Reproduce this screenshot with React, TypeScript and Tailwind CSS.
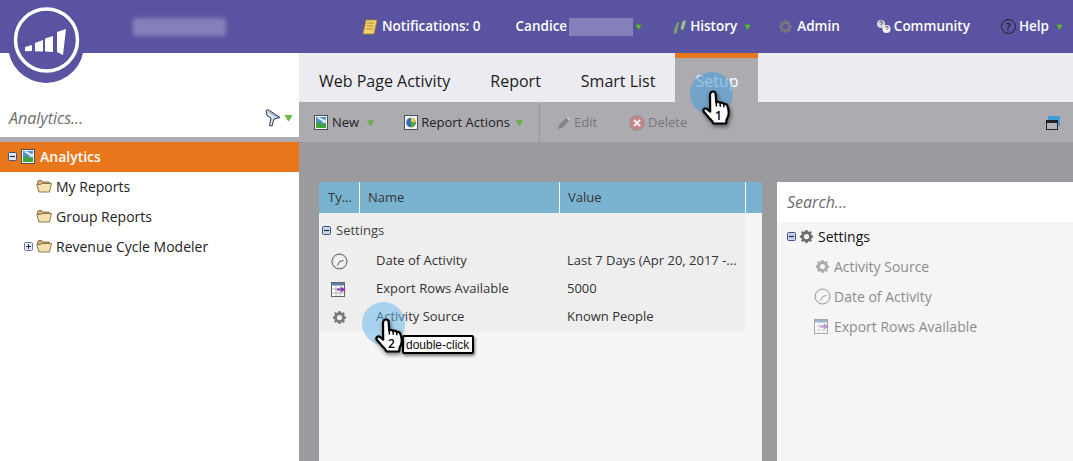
import { ReactNode } from "react";

const font = { fontFamily: '"Open Sans", sans-serif' };

const Caret = ({ className = "" }: { className?: string }) => (
  <svg width="9" height="8" viewBox="0 0 9 8" className={className}>
    <path d="M0.5 1h8L4.5 7.5z" fill="#62c22f" stroke="#3f8a22" strokeWidth="0.5" />
  </svg>
);

const Minus = ({ fill = "#dfe4ee" }: { fill?: string }) => (
  <svg width="9" height="9" viewBox="0 0 9 9" className="shrink-0">
    <rect x="0.5" y="0.5" width="8" height="8" rx="1" fill={fill} stroke="#3d5680" />
    <path d="M2 4.5h5" stroke="#1d2f55" strokeWidth="1.2" />
  </svg>
);

const Plus = () => (
  <svg width="9" height="9" viewBox="0 0 9 9" className="shrink-0">
    <rect x="0.5" y="0.5" width="8" height="8" rx="1" fill="#e8ebf2" stroke="#6a7a96" />
    <path d="M2 4.5h5M4.5 2v5" stroke="#1d2f55" />
  </svg>
);

const Folder = () => (
  <svg width="16" height="14" viewBox="0 0 16 14" className="shrink-0">
    <path d="M1.500 4.500V2.500l1-1h3l1.500 1.500h6l.5 1v8.500H3z" fill="#cfae6c" stroke="#6f6038" strokeWidth="0.8" />
    <path d="M.7 5.500h4l1-1h9.800l-2 8.500H3z" fill="#f4e2ae" stroke="#6f6038" strokeWidth="0.8" />
  </svg>
);

const ReportIcon = () => (
  <svg width="14" height="15" viewBox="0 0 14 15" className="shrink-0">
    <rect x="0.5" y="0.5" width="13" height="14" fill="#f3f5f8" stroke="#4a4f57" />
    <rect x="2" y="2" width="10" height="11" fill="#4f93cf" />
    <path d="M2 8l3-1 3 2 4-1v5H2z" fill="#3fa53a" />
    <path d="M3 3l6 3.500-1 1L12 8l-.5-4-1 1L5 2z" fill="#e9f2fa" />
  </svg>
);

const ActionsIcon = () => (
  <svg width="14" height="15" viewBox="0 0 14 15" className="shrink-0">
    <rect x="0.5" y="0.5" width="13" height="14" fill="#f3f5f8" stroke="#4a4f57" />
    <circle cx="7" cy="7.500" r="4.800" fill="#2f6fb5" />
    <path d="M7 7.500V2.700a4.800 4.800 0 014.800 4.800z" fill="#e9c93f" />
    <path d="M7 7.500h4.800A4.800 4.800 0 017 12.300z" fill="#56a83d" />
  </svg>
);

const Gear = ({ size = 16, color = "#7a7a7a" }: { size?: number; color?: string }) => (
  <svg width={size} height={size} viewBox="0 0 16 16" className="shrink-0">
    <circle cx="8" cy="8" r="4.300" fill="none" stroke={color} strokeWidth="3" />
    <path
      d="M8 1v2.500M8 12.500V15M1 8h2.500M12.500 8H15M3 3l1.800 1.800M11.200 11.200L13 13M13 3l-1.800 1.800M4.800 11.200L3 13"
      stroke={color}
      strokeWidth="2.400"
    />
  </svg>
);

const Clock = ({ faded = false }: { faded?: boolean }) => (
  <svg width="17" height="17" viewBox="0 0 17 17" className="shrink-0">
    <circle cx="8.500" cy="8.500" r="7.500" fill={faded ? "#eceef0" : "#dfe2e7"} stroke={faded ? "#9a9a9a" : "#5c5c5c"} />
    <circle cx="8.500" cy="8.500" r="5.800" fill={faded ? "#f7f7f7" : "#f1f2f4"} />
    <path d="M8.500 8.500L12.500 7.500M8.500 8.500L6.500 12.500" stroke={faded ? "#999" : "#555"} fill="none" />
  </svg>
);

const ExportIcon = ({ faded = false }: { faded?: boolean }) => (
  <svg width="16" height="15" viewBox="0 0 16 15" className="shrink-0">
    <rect x="0.500" y="0.500" width="13" height="14" fill="#fff" stroke={faded ? "#a5a5a5" : "#666"} />
    <rect x="1" y="1" width="12" height="2.500" fill={faded ? "#9fb4d0" : "#5b7fb5"} />
    <path d="M1 7h12M1 11h12M5 3v11M9 3v11" stroke={faded ? "#c5c5c5" : "#999"} strokeWidth="0.700" />
    <path d="M6 7.500h5" stroke={faded ? "#b99ad0" : "#8a3fb0"} strokeWidth="2" />
    <path d="M10 4.500l5 3-5 3z" fill={faded ? "#b99ad0" : "#8a3fb0"} />
  </svg>
);

// pointing hand cursor used by the numbered callouts
const Hand = ({ step, className }: { step: string; className: string }) => (
  <div className={`absolute h-[36px] w-[30px] ${className}`}>
    <svg width="30" height="36" viewBox="0 0 30 36" className="drop-shadow-[1px_2px_2px_rgba(0,0,0,0.55)]">
      <path
        d="M11 1.500c1.600 0 2.600 1.200 2.700 2.800l.5 8.200c1.400-1 3.300-.8 3.900.7 1.300-.9 3.100-.5 3.600 1 1.300-.6 2.900 0 3.500 1.300 1.300 2.800 1.800 6.400 1.300 9.500-.3 2-1.200 3.500-2 5l-.3 3.500H11.500c-1-2.300-2.600-3.700-4.400-5.600L1.800 21.800c-1.300-1.900.8-4.200 3-3l3.400 2.800-.2-16.800c0-1.700 1.300-3.300 3-3.300z"
        fill="#fff"
        stroke="#000"
        strokeWidth="2.200"
        strokeLinejoin="round"
      />
      <path d="M14.300 12.500l.1 4M18.100 13.200l.2 3.500M21.700 14.200l.1 3" stroke="#000" strokeWidth="1.500" />
    </svg>
    <span className="absolute left-[13px] top-[19px] text-[12px] font-semibold leading-[14px] text-black" style={font}>
      {step}
    </span>
  </div>
);

const NavItem = ({ icon, label, caret, className }: { icon?: ReactNode; label: string; caret?: boolean; className: string }) => (
  <div className={`flex items-center whitespace-nowrap ${className}`}>
    {icon}
    <span className="text-[13.5px] font-semibold text-white">{label}</span>
    {caret && <Caret className="ml-[6px] scale-75" />}
  </div>
);

const TreeRow = ({ children, className = "" }: { children: ReactNode; className?: string }) => (
  <div className={`flex h-[30px] items-center ${className}`}>{children}</div>
);

const PropRow = ({ icon, name, value }: { icon: ReactNode; name: string; value: string }) => (
  <div className="flex h-[28px] items-center text-[13px] text-[#333]">
    <div className="flex w-[40px] justify-center">{icon}</div>
    <div className="ml-[17px] w-[191px]">{name}</div>
    <div className="whitespace-nowrap">{value}</div>
  </div>
);

export default function App() {
  return (
    <div className="relative flex h-[461px] w-[1073px] flex-col overflow-hidden bg-white" style={font}>
      <header className="flex h-[53px] shrink-0 items-center bg-[#5a53a1]">
        <div className="ml-[133px] h-[18px] w-[93px] bg-[#8580bb] blur-[2px]" />
        <NavItem
          className="ml-[136px]"
          label="Notifications: 0"
          icon={
            <svg width="16" height="16" viewBox="0 0 16 16" className="mr-[4px]">
              <path d="M4 1h11l-3 14H1z" fill="#f3d36b" stroke="#a5802a" strokeWidth="0.800" />
              <path d="M5 4h7M4.500 7h7M4 10h7" stroke="#b08a2e" />
            </svg>
          }
        />
        <div className="ml-[35px] flex items-center">
          <span className="text-[13.5px] font-semibold text-white">Candice</span>
          <div className="ml-[2px] h-[18px] w-[64px] bg-[#8580bb]" />
          <Caret className="ml-[1px] scale-75" />
        </div>
        <NavItem
          className="ml-[29px]"
          label="History"
          caret
          icon={
            <svg width="15" height="16" viewBox="0 0 15 16" className="mr-[3px]">
              <path d="M4 5c1-2.500 3-3 3.200-1.500.2 1.800-1 4-1.500 6.500L5 14.500c-.5 1-3.500.8-3.500-.7C1.500 11 2.800 8 4 5z" fill="#7f9c92" stroke="#4a615a" strokeWidth="0.700" />
              <path d="M11 1.500c1.300-1 3-.5 3 1 0 2.500-1.500 5-2 7.500-.5 1.500-3 1.500-3.500 0C8.500 7 9.500 3.500 11 1.500z" fill="#a3b8b0" stroke="#4a615a" strokeWidth="0.700" />
            </svg>
          }
        />
        <NavItem
          className="ml-[26px]"
          label="Admin"
          icon={
            <span className="mr-[4px]">
              <Gear size={15} color="#77757f" />
            </span>
          }
        />
        <NavItem
          className="ml-[36px]"
          label="Community"
          icon={
            <svg width="15" height="16" viewBox="0 0 15 16" className="mr-[3px]">
              <circle cx="5" cy="5" r="4" fill="#d5d5dc" />
              <circle cx="10.500" cy="10" r="4" fill="#f1f1f4" />
              <path d="M3.800 3.500a1.300 1.300 0 112 1.200L5 5.800M9.500 8.500a1.300 1.300 0 112 1.200l-1 1.100" stroke="#333" fill="none" />
            </svg>
          }
        />
        <NavItem
          className="ml-[31px]"
          label="Help"
          caret
          icon={
            <span className="mr-[3px] flex h-[15px] w-[15px] items-center justify-center rounded-full border border-[#222] text-[11px] font-semibold leading-none text-[#222]">
              ?
            </span>
          }
        />
      </header>

      <div className="flex min-h-0 flex-1">
        <aside className="flex w-[299px] shrink-0 flex-col">
          <div className="flex h-[84px] shrink-0 items-end justify-between pb-[8px] pl-[9px] pr-[6px]">
            <span className="text-[16px] italic leading-[22px] text-[#6d6d6d]">Analytics...</span>
            <div className="mb-[2px] flex items-center gap-[3px]">
              <svg width="16" height="18" viewBox="0 0 16 18">
                <path d="M1 1.500c2-1.500 3.500 0 5 1L15 8.500 9 10l-2 7-2.500-.5L6 9 2 6.500z" fill="#dbe3ee" stroke="#2a3a52" />
                <path d="M3.500 2.500L13 8.500" stroke="#7f93ad" />
              </svg>
              <Caret className="scale-90" />
            </div>
          </div>
          <div className="h-[5px] shrink-0 bg-[#acabb0]" />
          <TreeRow className="bg-[#e8761b] pb-px pl-[8px]">
            <Minus />
            <span className="ml-[4px] flex">
              <ReportIcon />
            </span>
            <span className="ml-[5px] text-[14px] font-semibold text-white">Analytics</span>
          </TreeRow>
          {["My Reports", "Group Reports"].map((r) => (
            <TreeRow key={r} className="pb-[2px] pl-[36px] text-[14px] text-[#222]">
              <Folder />
              <span className="ml-[4px]">{r}</span>
            </TreeRow>
          ))}
          <TreeRow className="pb-[2px] pl-[24px] text-[14px] text-[#222]">
            <Plus />
            <span className="ml-[3px]">
              <Folder />
            </span>
            <span className="ml-[4px]">Revenue Cycle Modeler</span>
          </TreeRow>
        </aside>

        <main className="flex min-w-0 flex-1 flex-col">
          <div className="flex h-[49px] shrink-0 bg-[#ecebf1] text-[16px] text-[#1b1b1b]">
            <div className="flex items-center pl-[20px] pt-[7px]">Web Page Activity</div>
            <div className="ml-[40px] flex items-center pt-[7px]">Report</div>
            <div className="ml-[40px] flex items-center pt-[7px]">Smart List</div>
            <div className="ml-[20px] flex w-[83px] items-center justify-center border-t-[5px] border-[#e8761b] bg-[#acabb0] pt-[2px] text-white">
              Setup
            </div>
          </div>

          <div className="flex h-[40px] shrink-0 items-center bg-[#acabb0] pl-[15px] pr-[13px] pt-px text-[13px]">
            <ReportIcon />
            <span className="ml-[4px] text-[#222]">New</span>
            <Caret className="ml-[7px] scale-75" />
            <span className="ml-[29px] flex">
              <ActionsIcon />
            </span>
            <span className="ml-[3px] text-[#222]">Report Actions</span>
            <Caret className="ml-[5px] scale-75" />
            <div className="ml-[15px] h-full w-px bg-[#98979c]" />
            <svg width="14" height="14" viewBox="0 0 14 14" className="ml-[17px]">
              <path d="M1 13l1-4 7-7 3 3-7 7z" fill="#85848a" />
              <path d="M9.500 1.500l3 3 1-1.500-2-2z" fill="#c3ccd6" />
            </svg>
            <span className="ml-[3px] text-[#77767c]">Edit</span>
            <svg width="16" height="16" viewBox="0 0 16 16" className="ml-[32px]">
              <circle cx="8" cy="8" r="7.300" fill="#c98585" stroke="#8f8f8f" />
              <path d="M5 5l6 6M11 5l-6 6" stroke="#f4eaea" strokeWidth="2.200" />
            </svg>
            <span className="ml-[3px] text-[#77767c]">Delete</span>
            <div className="relative ml-auto h-[14px] w-[14px]">
              <div className="absolute right-0 top-0 h-[10px] w-[12px] rounded-[1px] bg-[#3f9bdc]" />
              <div className="absolute bottom-0 left-0 h-[10px] w-[12px] border-[1.500px] border-t-[3px] border-[#222] bg-[#b5b4b9]" />
            </div>
          </div>

          <div className="flex min-h-0 flex-1 gap-[15px] bg-[#9b9a9f] pl-[20px] pt-[40px]">
            <section className="flex w-[443px] shrink-0 flex-col bg-[#f5f5f5]">
              <div className="flex h-[31px] shrink-0 items-center bg-[#7ab3cf] text-[13px] text-[#333]">
                <div className="flex h-full w-[41px] items-center border-r border-white pl-[9px]">Ty...</div>
                <div className="flex h-full w-[200px] items-center border-r border-white pl-[8px]">Name</div>
                <div className="flex h-full w-[186px] items-center border-r border-white pl-[8px]">Value</div>
              </div>
              <div className="w-[426px] bg-[#eeeeee] pb-px">
                <div className="flex h-[34px] items-center pl-[3px] pt-px text-[13px] text-[#444]">
                  <Minus fill="#c9d3e4" />
                  <span className="ml-[5px]">Settings</span>
                </div>
                <PropRow icon={<Clock />} name="Date of Activity" value="Last 7 Days (Apr 20, 2017 -..." />
                <PropRow icon={<ExportIcon />} name="Export Rows Available" value="5000" />
                <PropRow icon={<Gear size={15} />} name="Activity Source" value="Known People" />
              </div>
            </section>

            <section className="flex min-w-0 flex-1 flex-col bg-[#f5f5f5]">
              <div className="flex h-[40px] shrink-0 items-center bg-white pl-[10px] text-[16px] italic text-[#6d6d6d]">
                Search...
              </div>
              <TreeRow className="pb-[2px] pl-[10px] text-[14px] text-[#111]">
                <Minus fill="#c9d3e4" />
                <span className="ml-[3px]">
                  <Gear size={15} color="#6c6c6c" />
                </span>
                <span className="ml-[4px]">Settings</span>
              </TreeRow>
              <TreeRow className="pb-[2px] pl-[38px] text-[14px] text-[#8c8c8c]">
                <Gear size={15} color="#aaaaaa" />
                <span className="ml-[4px]">Activity Source</span>
              </TreeRow>
              <TreeRow className="pb-[2px] pl-[37px] text-[14px] text-[#8c8c8c]">
                <Clock faded />
                <span className="ml-[3px]">Date of Activity</span>
              </TreeRow>
              <TreeRow className="pb-[2px] pl-[37px] text-[14px] text-[#8c8c8c]">
                <ExportIcon faded />
                <span className="ml-[4px]">Export Rows Available</span>
              </TreeRow>
            </section>
          </div>
        </main>
      </div>

      {/* logo sits over the header and the sidebar */}
      <svg width="80" height="84" viewBox="0 0 80 84" className="absolute left-[7px] top-0">
        <circle cx="39" cy="45" r="38" fill="#5a53a1" />
        <circle cx="39.500" cy="40" r="31" fill="none" stroke="#fff" strokeWidth="3.500" />
        <path d="M18 47l7-2v6l-7 .3zM28 43l8-3v11.500l-8-.3zM38 38.500l8-2.500v16l-8-.5zM50 32l9-3-3 26-6-3z" fill="#fff" />
      </svg>

      {/* callouts */}
      <div className="absolute left-[690px] top-[72px] h-[43px] w-[43px] rounded-full bg-[#4d9fd8]/60" />
      <Hand step="1" className="left-[702px] top-[90px]" />
      <div className="absolute left-[362px] top-[302px] h-[43px] w-[43px] rounded-full bg-[#5fb3ea]/50" />
      <div
        className="absolute left-[402px] top-[335px] flex h-[19px] w-[72px] items-center rounded-[2px] border-2 border-black bg-white pl-[2px] text-[12px] text-[#111] shadow-[1px_2px_3px_rgba(0,0,0,0.5)]"
        style={{ fontFamily: '"Liberation Sans", sans-serif' }}
      >
        double-click
      </div>
      <Hand step="2" className="left-[375px] top-[318px]" />
    </div>
  );
}
